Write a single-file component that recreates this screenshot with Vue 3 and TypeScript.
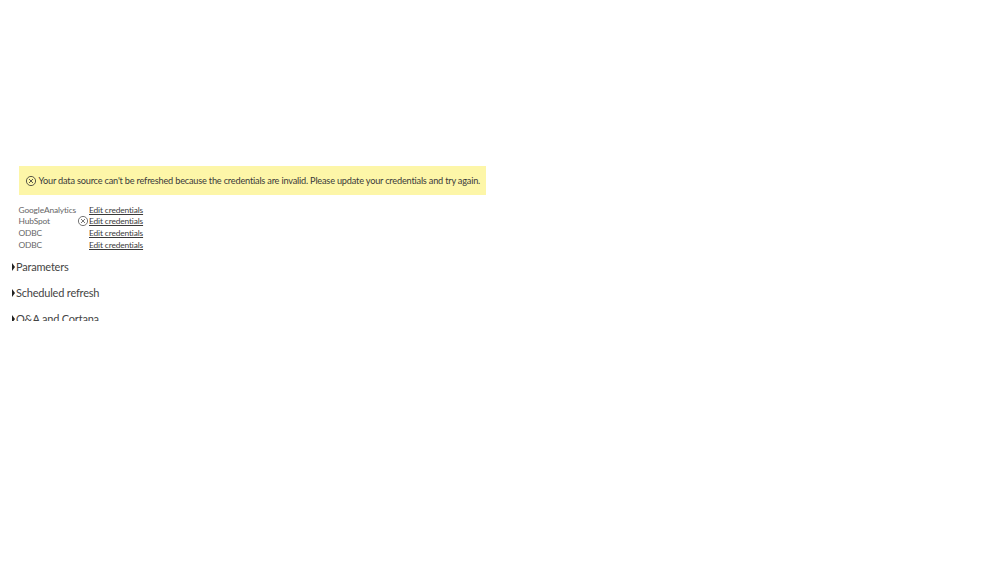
<script setup lang="ts">
const sources = [
  { name: 'GoogleAnalytics', error: false },
  { name: 'HubSpot', error: true },
  { name: 'ODBC', error: false },
  { name: 'ODBC', error: false },
]
const sections = ['Parameters', 'Scheduled refresh', 'Q&A and Cortana']
</script>

<template>
  <main class="page">
    <div class="clip">
      <div class="banner">
        <svg class="icon" viewBox="0 0 12 12" aria-hidden="true">
          <circle cx="6" cy="6" r="4.6" />
          <path d="M4 4l4 4M8 4l-4 4" />
        </svg>
        <span>Your data source can't be refreshed because the credentials are invalid. Please update your credentials and try again.</span>
      </div>
      <ul class="sources">
        <li v-for="(s, i) in sources" :key="i" class="source">
          <span class="name">{{ s.name }}</span>
          <span class="status">
            <svg v-if="s.error" class="icon row-icon" viewBox="0 0 12 12" aria-hidden="true">
              <circle cx="6" cy="6" r="4.6" />
              <path d="M4 4l4 4M8 4l-4 4" />
            </svg>
          </span>
          <a class="edit">Edit credentials</a>
        </li>
      </ul>
      <div class="sections">
        <div v-for="s in sections" :key="s" class="section">
          <span class="caret"></span>
          <span>{{ s }}</span>
        </div>
      </div>
    </div>
  </main>
</template>

<style>
html, body { margin: 0; background: #fff; }
</style>

<style scoped>
.page {
  width: 999px;
  height: 562px;
  overflow: hidden;
  background: #fff;
  font-family: Lato, "Open Sans", "Liberation Sans", sans-serif;
  padding-top: 166px;
  box-sizing: border-box;
}
.clip {
  height: 155px;
  overflow: hidden;
  padding-left: 11px;
}
.banner {
  margin-left: 7.5px;
  width: 467.5px;
  height: 29px;
  box-sizing: border-box;
  background: #fdf6a8;
  display: flex;
  align-items: center;
  gap: 1.5px;
  padding-left: 6.5px;
  font-size: 9.2px;
  letter-spacing: -0.2px;
  color: #3a3a3a;
  white-space: nowrap;
}
.icon {
  width: 12px;
  height: 12px;
  flex: none;
  fill: none;
  stroke: #333;
  stroke-width: 0.8;
}
.sources {
  list-style: none;
  margin: 9px 0 0 7.5px;
  padding: 0;
}
.source {
  display: flex;
  align-items: center;
  height: 11.67px;
  font-size: 8.4px;
  letter-spacing: -0.14px;
  color: #666;
}
.name { width: 59.5px; }
.status {
  width: 11px;
  display: flex;
  justify-content: flex-end;
}
.row-icon { stroke: #555; }
.edit {
  color: #3a3a3a;
  text-decoration: underline;
}
.sections { margin-top: 3px; }
.section {
  display: flex;
  align-items: center;
  height: 26px;
  font-size: 11px;
  letter-spacing: -0.2px;
  color: #444;
}
.caret {
  width: 0;
  height: 0;
  margin-left: 1px;
  border-left: 3px solid #222;
  border-top: 4px solid transparent;
  border-bottom: 4px solid transparent;
  margin-right: 1px;
}
</style>
